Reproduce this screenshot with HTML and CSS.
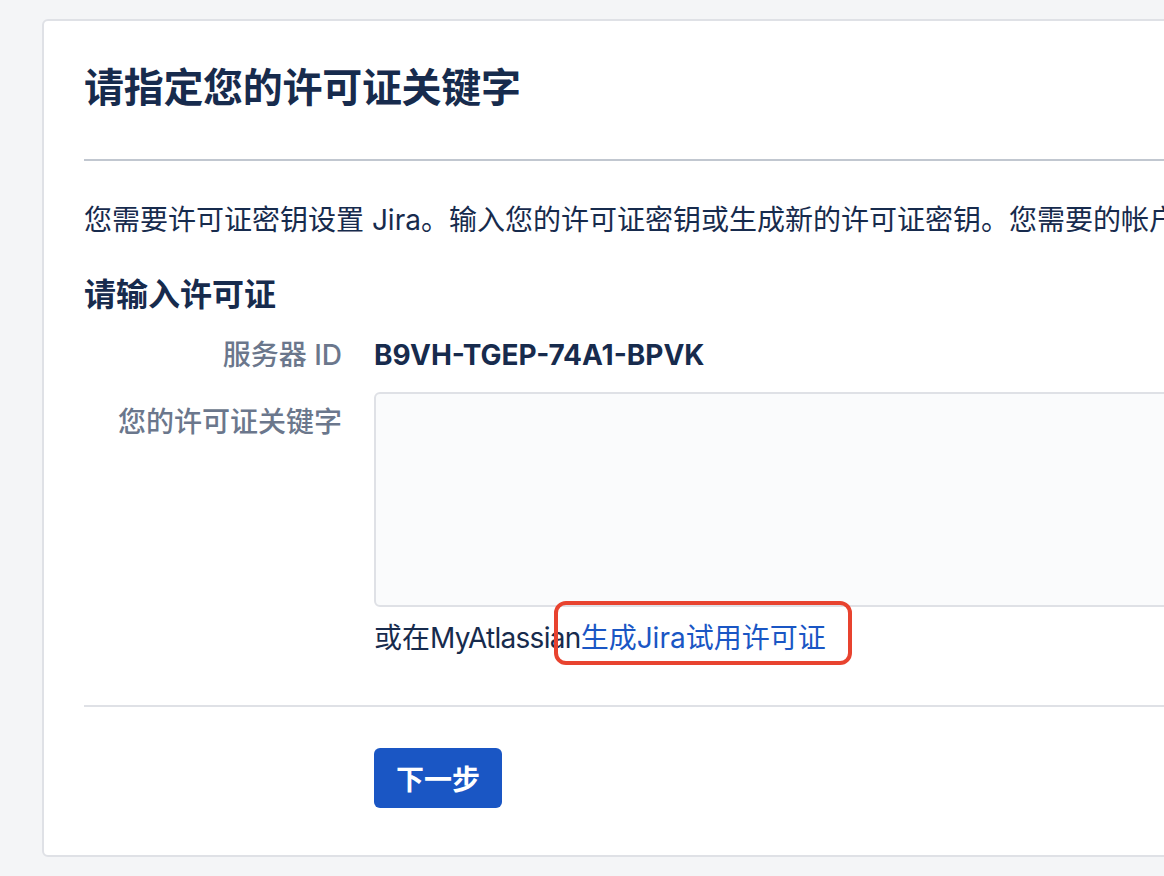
FILE: index.html
```
<!DOCTYPE html>
<html lang="zh">
<head>
    <meta charset="UTF-8" />
    <title>请指定您的许可证关键字</title>
    <link rel="stylesheet" href="styles.css">
</head>
<body>
    <div class="card">
        <div class="card-header">
            <h1>请指定您的许可证关键字</h1>
        </div>

        <p class="intro">您需要许可证密钥设置 Jira。输入您的许可证密钥或生成新的许可证密钥。您需要的帐户</p>

        <h3>请输入许可证</h3>

        <div class="field-row">
            <div class="field-label">服务器 ID</div>
            <div class="server-id">B9VH-TGEP-74A1-BPVK</div>
        </div>
        <div class="field-row key-row">
            <label class="field-label" for="licenseKey">您的许可证关键字</label>
            <div class="field-value">
                <textarea id="licenseKey"></textarea>
                <div class="hint">或在<span class="brand">MyAtlassian</span><a href="#" class="marked">生成Jira试用许可证</a></div>
            </div>
        </div>

        <div class="divider"></div>

        <div class="buttons">
            <button class="next-btn">下一步</button>
        </div>
    </div>
</body>
</html>
```

FILE: styles.css
```
body {
    margin: 0;
    background: #f4f5f7;
    font-family: Inter, "Noto Sans CJK SC", sans-serif;
    color: #172b4d;
    overflow: hidden;
    height: 876px;
}
.card {
    margin: 19px 0 0 42px;
    width: 1300px;
    background: #fff;
    border: 2px solid #dfe1e6;
    border-radius: 6px;
    padding: 0 40px 47px 40px;
    box-sizing: border-box;
}
.card-header {
    padding: 43px 0 47px;
    border-bottom: 2px solid #c1c7d0;
}
h1 {
    margin: 0;
    font-size: 40px;
    line-height: 48px;
    font-weight: bold;
    letter-spacing: -0.3px;
}
.intro {
    margin: 39px 0 0;
    font-size: 28px;
    line-height: 40px;
    white-space: nowrap;
}
h3 {
    margin: 35px 0 0;
    font-size: 32px;
    line-height: 40px;
    font-weight: bold;
}
.field-row {
    display: flex;
    gap: 32px;
    margin-top: 20px;
    font-size: 28px;
    line-height: 40px;
}
.field-label {
    width: 258px;
    flex: none;
    text-align: right;
    color: #6b778c;
    font-weight: 500;
}
.server-id {
    font-weight: bold;
}
.key-row {
    margin-top: 17px;
}
.key-row .field-label {
    padding-top: 10px;
}
.field-value {
    flex: 1;
}
textarea {
    display: block;
    width: 100%;
    height: 215px;
    box-sizing: border-box;
    background: #fafbfc;
    border: 2px solid #dfe1e6;
    border-radius: 6px;
    resize: none;
    margin: 0;
}
.hint {
    margin-top: 11px;
    white-space: nowrap;
}
.brand {
    letter-spacing: -0.7px;
}
.hint a {
    color: #1a56c4;
    text-decoration: none;
}
/* 标注红框 */
.marked {
    position: relative;
}
.marked::after {
    content: "";
    position: absolute;
    left: -27px;
    right: -26px;
    top: -20px;
    bottom: -10px;
    border: 4px solid #e8432f;
    border-radius: 12px;
}
.divider {
    height: 2px;
    background: #dfe1e6;
    margin-top: 47px;
}
.buttons {
    margin: 41px 0 0 290px;
}
.next-btn {
    height: 60px;
    padding: 0 22px;
    background: #1a56c4;
    color: #fff;
    border: none;
    border-radius: 6px;
    font-family: Inter, "Noto Sans CJK SC", sans-serif;
    font-size: 28px;
    font-weight: bold;
    cursor: pointer;
}
```
